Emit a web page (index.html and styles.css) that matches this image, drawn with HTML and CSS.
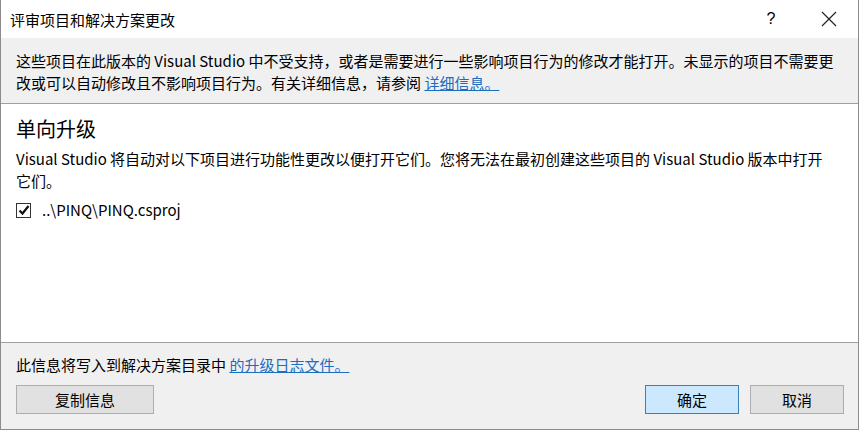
FILE: index.html
```html
<!DOCTYPE html>
<html lang="zh-CN">
<head>
    <meta charset="UTF-8">
    <title>评审项目和解决方案更改</title>
    <link rel="stylesheet" href="styles.css">
</head>
<body>
    <div class="dialog">
        <!-- 标题栏 -->
        <div class="titlebar">
            <span class="title">评审项目和解决方案更改</span>
            <span class="help">?</span>
            <span class="close">
                <svg width="16" height="16" viewBox="0 0 16 16"><path d="M1 1 L15 15 M15 1 L1 15" stroke="#222" stroke-width="1.2" fill="none"/></svg>
            </span>
        </div>

        <!-- 提示信息 -->
        <div class="info">
            这些项目在此版本的 Visual Studio 中不受支持，或者是需要进行一些影响项目行为的修改才能打开。未显示的项目不需要更改或可以自动修改且不影响项目行为。有关详细信息，请参阅 <a href="#" class="link">详细信息。</a>
        </div>

        <!-- 项目列表 -->
        <div class="content">
            <h2>单向升级</h2>
            <p class="desc">Visual Studio 将自动对以下项目进行功能性更改以便打开它们。您将无法在最初创建这些项目的 Visual Studio 版本中打开它们。</p>
            <label class="item">
                <span class="check">
                    <svg width="12" height="12" viewBox="0 0 12 12"><path d="M1.5 6.5 L4.5 9.5 L10.5 2" stroke="#111" stroke-width="2.2" fill="none"/></svg>
                </span>
                ..\PINQ\PINQ.csproj
            </label>
        </div>

        <!-- 底部 -->
        <div class="footer">
            <p>此信息将写入到解决方案目录中 <a href="#" class="link">的升级日志文件。</a></p>
            <div class="buttons">
                <button class="btn copy">复制信息</button>
                <button class="btn ok">确定</button>
                <button class="btn">取消</button>
            </div>
        </div>
    </div>
</body>
</html>
```

FILE: styles.css
```css
* {
    margin: 0;
    padding: 0;
    box-sizing: border-box;
}

body {
    width: 859px;
    height: 430px;
    overflow: hidden;
    background: #fff;
    font-family: "Noto Sans CJK SC", "Noto Sans", sans-serif;
    font-size: 15px;
    color: #000;
}

.dialog {
    height: 430px;
    display: flex;
    flex-direction: column;
    border: 1px solid #8c8c8c;
    border-top: none;
}

/* 标题栏 */
.titlebar {
    height: 38px;
    display: flex;
    align-items: center;
    padding-left: 9px;
    padding-right: 6px;
}

.title {
    flex: 1;
    font-size: 15px;
}

.help {
    width: 40px;
    text-align: center;
    font-family: "Liberation Sans", sans-serif;
    font-size: 16px;
    margin-right: 15px;
}

.close {
    width: 46px;
    height: 38px;
    display: flex;
    align-items: center;
    justify-content: center;
}

/* 提示信息 */
.info {
    background: #f0f0f0;
    height: 66px;
    padding: 12px 18px 0 15px;
    line-height: 22px;
    border-bottom: 1px solid #a0a0a0;
}

.link {
    color: #1a6dc0;
    text-decoration: underline;
}

/* 内容 */
.content {
    flex: 1;
    padding: 11px 22px 0 15px;
}

.content h2 {
    font-size: 20px;
    font-weight: normal;
    line-height: 28px;
}

.desc {
    margin-top: 5px;
    line-height: 22px;
}

.item {
    display: flex;
    align-items: center;
    margin-top: 7px;
    line-height: 22px;
}

.check {
    width: 15px;
    height: 15px;
    border: 1px solid #333;
    display: flex;
    align-items: center;
    justify-content: center;
    margin-right: 11px;
}

/* 底部 */
.footer {
    background: #f0f0f0;
    border-top: 1px solid #a0a0a0;
    height: 87px;
    padding: 11px 14px 0 15px;
    line-height: 22px;
}

.buttons {
    display: flex;
    margin-top: 9px;
    gap: 11px;
}

.btn {
    width: 94px;
    height: 29px;
    background: #e1e1e1;
    border: 1px solid #adadad;
    font-family: inherit;
    font-size: 15px;
}

.btn.copy {
    width: 138px;
    margin-right: auto;
}

.btn.ok {
    background: #cce8ff;
    border-color: #3c7fb1;
}
```
